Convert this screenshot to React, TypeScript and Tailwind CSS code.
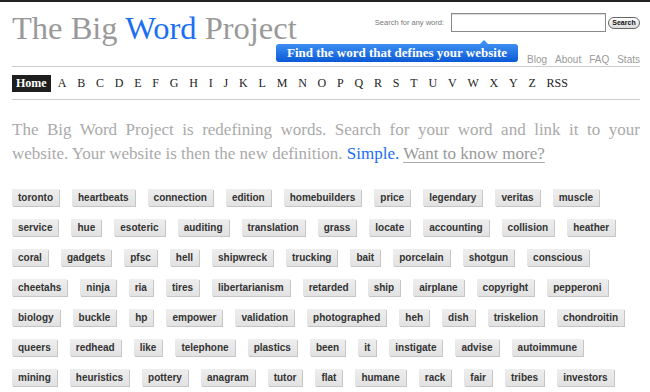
const letters = "ABCDEFGHIJKLMNOPQRSTUVWXYZ".split("");

const rows: string[][] = [
  ["toronto", "heartbeats", "connection", "edition", "homebuilders", "price", "legendary", "veritas", "muscle"],
  ["service", "hue", "esoteric", "auditing", "translation", "grass", "locate", "accounting", "collision", "heather"],
  ["coral", "gadgets", "pfsc", "hell", "shipwreck", "trucking", "bait", "porcelain", "shotgun", "conscious"],
  ["cheetahs", "ninja", "ria", "tires", "libertarianism", "retarded", "ship", "airplane", "copyright", "pepperoni"],
  ["biology", "buckle", "hp", "empower", "validation", "photographed", "heh", "dish", "triskelion", "chondroitin"],
  ["queers", "redhead", "like", "telephone", "plastics", "been", "it", "instigate", "advise", "autoimmune"],
  ["mining", "heuristics", "pottery", "anagram", "tutor", "flat", "humane", "rack", "fair", "tribes", "investors"],
];

const serif = "font-['Liberation_Serif',Georgia,serif]";
const sans = "font-['Liberation_Sans',Arial,sans-serif]";

function Tag({ word }: { word: string }) {
  return (
    <a
      href="#"
      className={`${sans} h-[17px] bg-gradient-to-b from-[#eeeeee] to-[#e2e2e2] px-[6px] text-[10px] font-bold leading-[17px] text-[#333] shadow-[1px_1px_0_#c6c6c6]`}
    >
      {word}
    </a>
  );
}

export default function App() {
  return (
    <div className="min-h-[392px] bg-white">
      <div className="h-[2px] bg-[#222]" />
      <div className="ml-3 mr-[10px]">
        <header className="relative flex h-[65px] justify-between border-b border-[#cccccc]">
          <h1 className={`${serif} pt-[8px] text-[32.5px] leading-[36px] text-[#999]`}>
            The Big <span className="text-[#1a6ff5]">Word</span> Project
          </h1>

          <div className="flex flex-col items-end justify-between">
            <form className="mt-[11px] flex items-center">
              <label className={`${sans} mr-[7px] text-[7.5px] text-[#777]`}>Search for any word:</label>
              <input
                type="text"
                className="h-[19px] w-[155px] border border-[#8a8a8a] bg-white shadow-[inset_0_1px_1px_rgba(0,0,0,0.15)] outline-none"
              />
              <button
                type="button"
                className={`${sans} ml-[2px] h-[12px] w-[32px] rounded-full border border-[#666] bg-gradient-to-b from-white to-[#dcdcdc] text-[7px] font-bold leading-[10px] text-[#111]`}
              >
                Search
              </button>
            </form>
            <nav className={`${sans} flex gap-[8px] text-[10px] leading-[12px] text-[#999]`}>
              <a href="#">Blog</a>
              <a href="#">About</a>
              <a href="#">FAQ</a>
              <a href="#">Stats</a>
            </nav>
          </div>

          <div className="absolute left-[264px] top-[42px] h-[18px] w-[242px] rounded-[3px] bg-gradient-to-b from-[#3d8ef2] to-[#0b59d6]">
            <span className="absolute right-[30px] top-[-4px] h-0 w-0 border-x-[4px] border-b-[4px] border-x-transparent border-b-[#3d8ef2]" />
            <p className={`${serif} text-center text-[13px] font-bold leading-[18px] text-white`}>
              Find the word that defines your website
            </p>
          </div>
        </header>

        <nav className={`${serif} flex h-[33px] items-center border-b border-[#cccccc] text-[12px] text-[#222]`}>
          <a href="#" className="mr-[7px] h-[17px] bg-[#1e1e1e] px-[4px] font-bold leading-[17px] text-white">
            Home
          </a>
          <div className="flex gap-[10.8px]">
            {letters.map((l) => (
              <a key={l} href="#">
                {l}
              </a>
            ))}
            <a href="#">RSS</a>
          </div>
        </nav>

        <div className={`${serif} mt-[18px] text-[17px] leading-[24px] text-[#aaa]`}>
          <p className="text-justify [text-align-last:justify]">
            The Big Word Project is redefining words. Search for your word and link it to your
          </p>
          <p>
            website. Your website is then the new definition.{" "}
            <a href="#" className="text-[#1a6ff5]">
              Simple.
            </a>{" "}
            <a href="#" className="text-[#999] underline decoration-[#aaa] underline-offset-[3px]">
              Want to know more?
            </a>
          </p>
        </div>

        <div className="mt-[23px] flex flex-col gap-[13px]">
          {rows.map((row, i) => (
            <div key={i} className="flex gap-[13px]">
              {row.map((w) => (
                <Tag key={w} word={w} />
              ))}
            </div>
          ))}
        </div>
      </div>
    </div>
  );
}
